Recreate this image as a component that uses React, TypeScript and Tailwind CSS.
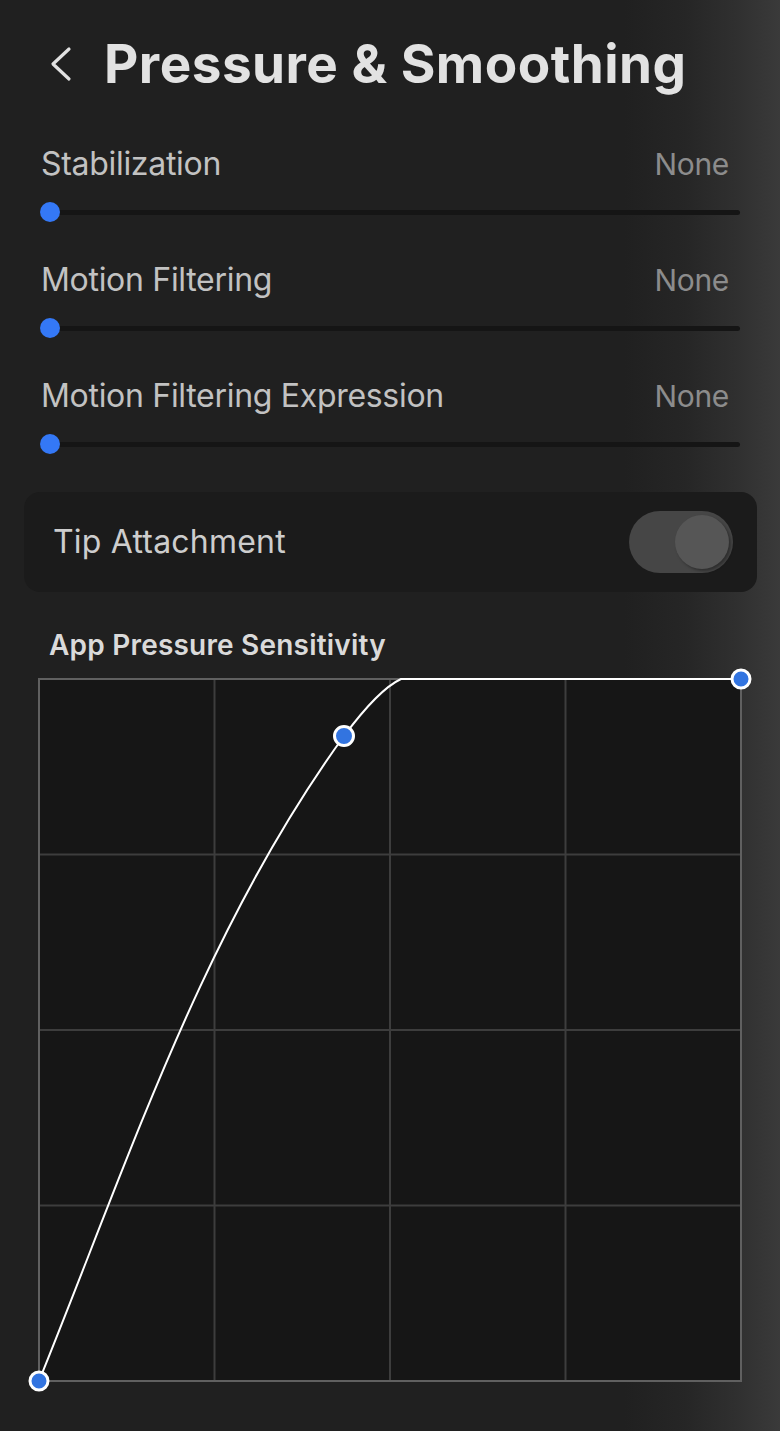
import React from "react";

const font = { fontFamily: "Inter, 'Noto Sans', 'Liberation Sans', sans-serif" };

function SliderRow({ label, mt }: { label: string; mt: string }) {
  return (
    <div className={`flex flex-col ${mt}`}>
      <div className="flex items-center justify-between pl-[41px] pr-[51px] h-[40px]">
        <span className="text-[32px] leading-[40px] text-[#c2c2c2] tracking-[-0.3px]">{label}</span>
        <span className="text-[30px] leading-[40px] text-[#8c8c8c] tracking-[-0.3px]">None</span>
      </div>
      <div className="relative mt-[18px] h-[20px] ml-[40px] mr-[40px] flex items-center">
        <div className="h-[5px] w-full rounded-full bg-[#151515]" />
        <div className="absolute left-0 top-0 h-[20px] w-[20px] rounded-full bg-[#3478f6]" />
      </div>
    </div>
  );
}

function Graph() {
  const s = 702;
  const q = s / 4;
  const lines = [1, 2, 3];
  return (
    <svg width={s} height={s} viewBox={`0 0 ${s} ${s}`} className="overflow-visible block">
      <rect x={0} y={0} width={s} height={s} fill="#161616" />
      {lines.map((i) => (
        <line key={"v" + i} x1={q * i} y1={0} x2={q * i} y2={s} stroke="#3d3d3d" strokeWidth={2} />
      ))}
      {lines.map((i) => (
        <line key={"h" + i} x1={0} y1={q * i} x2={s} y2={q * i} stroke="#3d3d3d" strokeWidth={2} />
      ))}
      <rect x={0} y={0} width={s} height={s} fill="none" stroke="#606060" strokeWidth={2} />
      <path
        d="M 0 702 C 90 480, 165 250, 305 57 C 325 30, 345 8, 362 0 L 702 0"
        fill="none"
        stroke="#ffffff"
        strokeWidth={2}
      />
      <circle cx={0} cy={702} r={9} fill="#3274e0" stroke="#ffffff" strokeWidth={3} />
      <circle cx={305} cy={57} r={9.5} fill="#3274e0" stroke="#ffffff" strokeWidth={3} />
      <circle cx={702} cy={0} r={9} fill="#3274e0" stroke="#ffffff" strokeWidth={3} />
    </svg>
  );
}

export default function App() {
  return (
    <div
      style={font}
      className="w-[780px] h-[1431px] overflow-hidden bg-[linear-gradient(to_right,#202020_0%,#202020_80%,#262626_88%,#2f2f2f_94%,#3a3a3a_100%)]"
    >
      <div className="flex items-center h-[56px] mt-[36px] pl-[48px]">
        <svg width="26" height="36" viewBox="0 0 26 36" className="mr-[30px]">
          <path d="M 21 3 L 5 18 L 21 33" fill="none" stroke="#e2e2e2" strokeWidth={3.2} strokeLinecap="round" strokeLinejoin="round" />
        </svg>
        <h1 className="text-[53px] leading-[56px] font-bold text-[#e2e2e2] tracking-[0.5px]">Pressure &amp; Smoothing</h1>
      </div>

      <SliderRow label="Stabilization" mt="mt-[52px]" />
      <SliderRow label="Motion Filtering" mt="mt-[38px]" />
      <SliderRow label="Motion Filtering Expression" mt="mt-[38px]" />

      <div className="mt-[38px] ml-[24px] w-[733px] h-[100px] rounded-[16px] bg-[#1b1b1b] flex items-center justify-between pl-[29px] pr-[24px]">
        <span className="text-[32px] leading-[40px] text-[#cdcdcd] tracking-[0.2px]">Tip Attachment</span>
        <div className="w-[104px] h-[62px] rounded-full bg-[#464646] flex items-center justify-end pr-[4px]">
          <div className="w-[54px] h-[54px] rounded-full bg-[#565656] shadow-[2px_2px_3px_rgba(0,0,0,0.35)]" />
        </div>
      </div>

      <div className="mt-[37px] pl-[49px] h-[32px] flex items-center">
        <span className="text-[28px] leading-[32px] font-semibold text-[#dadada] tracking-[0.2px]">App Pressure Sensitivity</span>
      </div>

      <div className="mt-[18px] ml-[39px]">
        <Graph />
      </div>
    </div>
  );
}
